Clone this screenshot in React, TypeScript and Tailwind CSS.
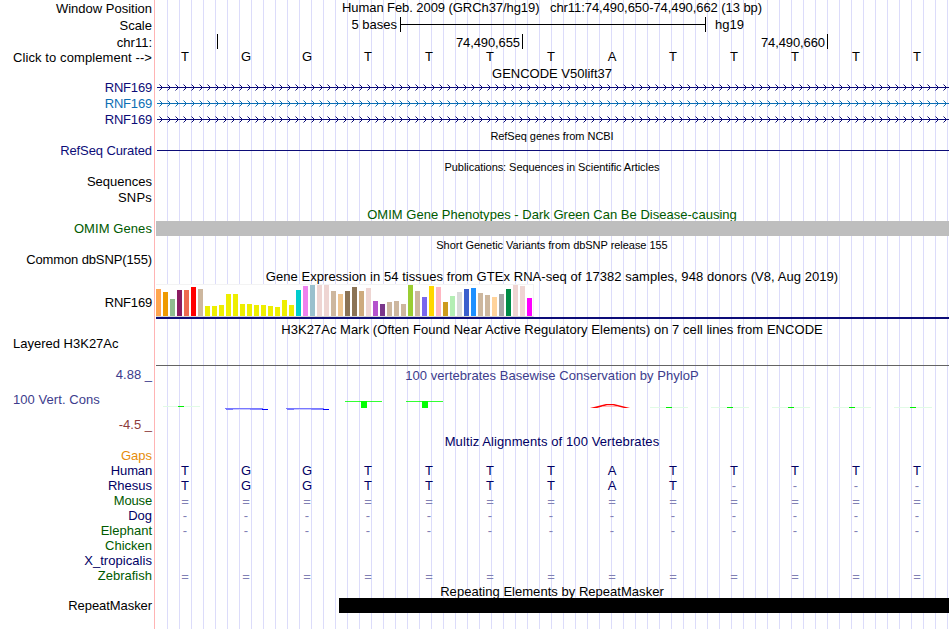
import React from 'react';
import clsx from 'clsx';

const SEQUENCE = 'TGGTTTTATTTTT';

const GTEX_BARS: [number, string][] = [
  [27, '#ffa54f'], [24, '#ee9a00'], [17, '#8fbc8f'], [26, '#8b1c62'], [26, '#ee6a50'], [29, '#ff0000'],
  [27, '#cdb79e'], [10, '#eeee00'], [10, '#eeee00'], [11, '#eeee00'], [22, '#eeee00'], [22, '#eeee00'],
  [12, '#eeee00'], [12, '#eeee00'], [11, '#eeee00'], [11, '#eeee00'], [10, '#eeee00'], [9, '#eeee00'],
  [16, '#eeee00'], [11, '#eeee00'], [26, '#00cdcd'], [30, '#ee82ee'], [31, '#9ac0cd'], [31, '#eed5d2'],
  [31, '#eed5d2'], [25, '#cdb79e'], [22, '#eec591'], [25, '#8b7355'], [29, '#8b7355'], [25, '#cdaa7d'],
  [28, '#eed5d2'], [15, '#b452cd'], [12, '#7a378b'], [14, '#cdb79e'], [15, '#cdb79e'], [12, '#cdb79e'],
  [31, '#9acd32'], [25, '#cdb79e'], [19, '#7a67ee'], [30, '#ffd700'], [29, '#ffb6c1'], [14, '#cd9b1d'],
  [20, '#b4eeb4'], [24, '#d9d9d9'], [27, '#3a5fcd'], [28, '#1e90ff'], [23, '#cdb79e'], [21, '#cdb79e'],
  [19, '#ffd39b'], [22, '#a6a6a6'], [27, '#008b45'], [31, '#eed5d2'], [30, '#eed5d2'], [18, '#ff00ff'],
];

interface RowProps {
  height: string;
  label?: React.ReactNode;
  labelClass?: string;
  children?: React.ReactNode;
}

const Row: React.FC<RowProps> = ({ height, label, labelClass, children }) => (
  <div className={clsx('flex shrink-0', height)}>
    <div className={clsx('w-[155px] shrink-0 border-r border-[#ffb4b4] pr-[2px] text-right', labelClass)}>{label}</div>
    <div className="w-[794px] shrink-0">{children}</div>
  </div>
);

const Title: React.FC<{ className?: string; children: React.ReactNode }> = ({ className, children }) => (
  <div className={clsx('text-center', className)}>{children}</div>
);

// gaps and unaligned bases are drawn in the lighter shade
const Bases: React.FC<{ text: string; className?: string }> = ({ text, className }) => (
  <div className={clsx('-ml-[0.5px] grid w-[793px] grid-cols-13 text-center', className)}>
    {text.split('').map((base, i) => (
      <span key={i} className={clsx((base === '-' || base === '=') && 'text-[#8080b4]')}>
        {base}
      </span>
    ))}
  </div>
);

const Transcript: React.FC<{ color: string }> = ({ color }) => (
  <svg width="794" height="16" viewBox="0 0 794 16" className="block" fill={color} shapeRendering="crispEdges">
    <rect x="2" y="7" width="792" height="1" />
    {Array.from({ length: 99 }, (_, i) => (
      <g key={i} transform={`translate(${i * 8} 0)`}>
        <path d="M6 6h1v1h-1zM5 5h1v1h-1zM6 8h1v1h-1zM5 9h1v1h-1z" />
        <path d="M4 4h1v1h-1zM4 10h1v1h-1z" opacity="0.5" />
      </g>
    ))}
  </svg>
);

const Gtex = () => (
  <div className="flex h-9 flex-col pl-px">
    <div className="flex h-[33px] w-[378px] items-end gap-[2px] border-t border-r border-b border-t-[#f3f3f3] border-r-[#f3f3f3] border-b-[#d3d3d3] bg-white">
      {GTEX_BARS.map(([height, color], i) => (
        <div key={i} className="w-[5px] shrink-0" style={{ height, backgroundColor: color }} />
      ))}
    </div>
    <div className="h-[2px] bg-[#0c0c78]" />
  </div>
);

const Conservation = () => (
  <svg width="794" height="36" viewBox="155 390 794 36" className="block" shapeRendering="crispEdges">
    <rect x="163" y="406" width="37" height="1" fill="#e1fbe6" />
    <rect x="178" y="406" width="6" height="1" fill="#00f000" />
    {[225, 286].map((x) => (
      <g key={x}>
        <rect x={x} y="408" width="38" height="1" fill="#7878ff" />
        <rect x={x + 1} y="409" width="7" height="1" fill="#7878ff" />
        <rect x={x + 8} y="409" width="17" height="1" fill="#c8c8ff" />
        <rect x={x + 25} y="409" width="12" height="1" fill="#8c8cff" />
        <rect x={x + 37} y="409" width="6" height="1" fill="#0000ff" />
      </g>
    ))}
    {[345, 406].map((x) => (
      <g key={x} fill="#00ff00">
        <rect x={x} y="401" width="37" height="1" opacity="0.8" />
        <rect x={x + 16} y="401" width="6" height="7" />
      </g>
    ))}
    <path d="M590 408L606 404H614L630 408H624L613 405.3H607L597 408Z" fill="#ff0000" shapeRendering="auto" />
    <path d="M602 406.5H618" stroke="#ff9a9a" strokeWidth="0.7" shapeRendering="auto" />
    {[650, 711, 772, 833, 894].map((x) => (
      <g key={x}>
        <rect x={x} y="407" width="38" height="1" fill="#e1fbe6" />
        <rect x={x + 16} y="407" width="6" height="1" fill="#00f000" />
      </g>
    ))}
  </svg>
);

export default function App() {
  return (
    <div className="flex h-[629px] w-[949px] flex-col overflow-hidden bg-[repeating-linear-gradient(to_right,#dcdcfa_0px,#dcdcfa_1px,transparent_1px,transparent_12px)] bg-[position:167px_0px] bg-no-repeat font-['Liberation_Sans',Arial,sans-serif] text-[13px] leading-[15px] whitespace-pre text-black">
      <Row height="h-[17px]" label="Window Position" labelClass="pt-px">
        <Title className="tracking-[-0.07px]">
          {'Human Feb. 2009 (GRCh37/hg19)   chr11:74,490,650-74,490,662 (13 bp)'}
        </Title>
      </Row>
      <Row height="h-[17px]" label="Scale" labelClass="pt-px">
        <div className="flex">
          <span className="w-[242px] text-right">5 bases</span>
          <div className="ml-[3px] flex h-[15px] w-[306px] items-center border-x border-black">
            <div className="h-px w-full bg-black" />
          </div>
          <span className="ml-[9px]">hg19</span>
        </div>
      </Row>
      <Row height="h-[15px]" label="chr11:" labelClass="pt-px">
        <div className="flex tracking-[-0.1px]">
          <div className="h-[15px] w-[63px] border-r border-black" />
          <div className="h-[15px] w-[305px] border-r border-black pt-px pr-[2px] text-right">74,490,655</div>
          <div className="h-[15px] w-[305px] border-r border-black pt-px pr-[2px] text-right">74,490,660</div>
        </div>
      </Row>
      <Row height="h-4" label="Click to complement -->" labelClass="pt-px tracking-[0.09px]">
        <Bases text={SEQUENCE} />
      </Row>

      <Row height="h-[15px]">
        <Title className="pt-px">GENCODE V50lift37</Title>
      </Row>
      <Row height="h-4" label="RNF169" labelClass="tracking-[-0.18px] text-[#0c0c78]">
        <Transcript color="#0c0c78" />
      </Row>
      <Row height="h-4" label="RNF169" labelClass="tracking-[-0.18px] text-[#0c6eb4]">
        <Transcript color="#0c6eb4" />
      </Row>
      <Row height="h-4" label="RNF169" labelClass="tracking-[-0.18px] text-[#0c0c78]">
        <Transcript color="#0c0c78" />
      </Row>

      <Row height="h-[15px]">
        <Title className="pt-[2px] text-[11px] leading-3 tracking-[-0.04px]">RefSeq genes from NCBI</Title>
      </Row>
      <Row height="h-4" label="RefSeq Curated" labelClass="tracking-[-0.1px] text-[#0c0c78]">
        <div className="mt-[7px] ml-[2px] h-px bg-[#0c0c78]" />
      </Row>

      <Row height="h-[15px]">
        <Title className="pt-[2px] text-[11px] leading-3 tracking-[-0.06px]">
          Publications: Sequences in Scientific Articles
        </Title>
      </Row>
      <Row height="h-4" label="Sequences" />
      <Row height="h-4" label="SNPs" labelClass="tracking-[0.2px]" />

      <Row height="h-[15px]">
        <Title className="pt-px tracking-[0.02px] text-[#005a00]">
          OMIM Gene Phenotypes - Dark Green Can Be Disease-causing
        </Title>
      </Row>
      <Row height="h-[15px]" label="OMIM Genes" labelClass="tracking-[0.08px] text-[#005a00]">
        <div className="relative ml-px h-[15px] bg-[#bebebe]" />
      </Row>

      <Row height="h-4">
        <Title className="pt-[3px] text-[11px] leading-3 tracking-[-0.04px]">
          Short Genetic Variants from dbSNP release 155
        </Title>
      </Row>
      <Row height="h-4" label="Common dbSNP(155)" labelClass="tracking-[-0.12px]" />

      <Row height="h-4">
        <Title className="pt-px tracking-[0.056px]">
          Gene Expression in 54 tissues from GTEx RNA-seq of 17382 samples, 948 donors (V8, Aug 2019)
        </Title>
      </Row>
      <Row height="h-9" label="RNF169" labelClass="pt-[11px] tracking-[-0.18px]">
        <Gtex />
      </Row>

      <Row height="h-4">
        <Title className="pt-[2px] tracking-[0.047px]">
          H3K27Ac Mark (Often Found Near Active Regulatory Elements) on 7 cell lines from ENCODE
        </Title>
      </Row>
      <Row height="h-[29px]" label={<div className="pl-[13px] text-left">Layered H3K27Ac</div>} />

      <Row
        height="h-[69px]"
        labelClass="pt-[2px]"
        label={
          <div className="text-[#3c3c8c]">
            <div>4.88 _</div>
            <div className="mt-[10px] pl-[13px] text-left tracking-[0.06px]">100 Vert. Cons</div>
            <div className="mt-[10px] text-[#8c3c3c]">-4.5 _</div>
          </div>
        }
      >
        <div className="ml-px h-px bg-[#646464]" />
        <Title className="h-6 pt-[2px] tracking-[0.03px] text-[#3c3c8c]">
          100 vertebrates Basewise Conservation by PhyloP
        </Title>
        <Conservation />
      </Row>

      <Row height="h-[14px]">
        <Title className="tracking-[0.1px] text-[#000064]">Multiz Alignments of 100 Vertebrates</Title>
      </Row>
      <Row height="h-[15px]" label="Gaps" labelClass="text-[#e68c0a]" />
      <Row height="h-[15px]" label="Human" labelClass="tracking-[-0.15px] text-[#000064]">
        <Bases text={SEQUENCE} className="text-[#000064]" />
      </Row>
      <Row height="h-[15px]" label="Rhesus" labelClass="text-[#000064]">
        <Bases text="TGGTTTTAT----" className="text-[#000064]" />
      </Row>
      <Row height="h-[15px]" label="Mouse" labelClass="tracking-[-0.15px] text-[#005a00]">
        <Bases text="=============" className="pt-px" />
      </Row>
      <Row height="h-[15px]" label="Dog" labelClass="text-[#000064]">
        <Bases text="-------------" />
      </Row>
      <Row height="h-[15px]" label="Elephant" labelClass="text-[#005a00]">
        <Bases text="-------------" />
      </Row>
      <Row height="h-[15px]" label="Chicken" labelClass="text-[#005a00]" />
      <Row height="h-[15px]" label="X_tropicalis" labelClass="tracking-[0.05px] text-[#000064]" />
      <Row height="h-[15px]" label="Zebrafish" labelClass="text-[#005a00]">
        <Bases text="=============" className="pt-px" />
      </Row>

      <Row height="h-[15px]">
        <Title className="pt-px tracking-[0.03px]">Repeating Elements by RepeatMasker</Title>
      </Row>
      <Row height="h-[15px]" label="RepeatMasker" labelClass="tracking-[-0.07px]">
        <div className="relative ml-[184px] h-[15px] bg-black" />
      </Row>
      <Row height="h-4" />
    </div>
  );
}
